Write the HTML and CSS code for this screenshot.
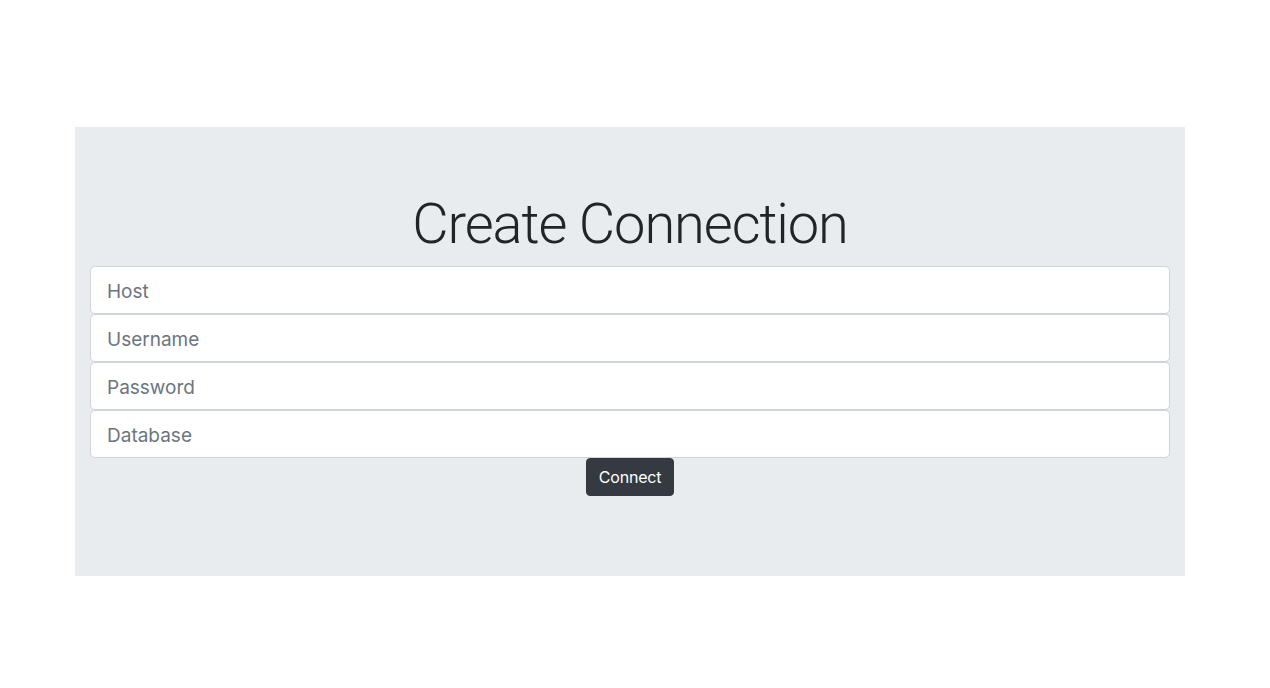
FILE: index.html
```html
<!DOCTYPE html>
<html lang="en">
<head>
<meta charset="utf-8">
<title>Create Connection</title>
<link rel="stylesheet" href="styles.css">
</head>
<body>
<div class="page">
  <div class="jumbotron">
    <h1 class="title">Create Connection</h1>
    <form class="conn-form">
      <input class="field" type="text" placeholder="Host">
      <input class="field" type="text" placeholder="Username">
      <input class="field" type="password" placeholder="Password">
      <input class="field" type="text" placeholder="Database">
      <div class="actions">
        <button class="btn-dark" type="button">Connect</button>
      </div>
    </form>
  </div>
</div>
</body>
</html>
```

FILE: styles.css
```css
html, body {
  margin: 0;
  padding: 0;
  background: #ffffff;
  font-family: "Inter", "Liberation Sans", Arial, sans-serif;
  color: #212529;
}

.page {
  padding: 127px 0 0 75px;
}

.jumbotron {
  width: 1110px;
  box-sizing: border-box;
  background: #e9ecef;
  padding: 64px 15px 80px;
  text-align: center;
}

.title {
  margin: 0 0 8px;
  font-family: "Roboto", "Inter", sans-serif;
  font-size: 56px;
  font-weight: 300;
  line-height: 1.2;
  letter-spacing: -1.1px;
  color: #212529;
}

.conn-form {
  display: flex;
  flex-direction: column;
  margin: 0;
}

.field {
  display: block;
  width: 100%;
  box-sizing: border-box;
  height: 48px;
  padding: 9px 16px 7px;
  font-family: "Inter", "Liberation Sans", Arial, sans-serif;
  font-size: 19px;
  line-height: 1.5;
  color: #495057;
  background: #ffffff;
  border: 1px solid #ced4da;
  border-radius: 4.8px;
  outline: none;
}

.field::placeholder {
  color: #6c757d;
  opacity: 1;
}

.actions {
  display: flex;
  justify-content: center;
}

.btn-dark {
  height: 38px;
  padding: 6px 12px;
  font-family: "Inter", "Liberation Sans", Arial, sans-serif;
  font-size: 16px;
  line-height: 1.5;
  letter-spacing: -0.2px;
  color: #ffffff;
  background: #343a40;
  border: 1px solid #343a40;
  border-radius: 4px;
  cursor: pointer;
}
```
